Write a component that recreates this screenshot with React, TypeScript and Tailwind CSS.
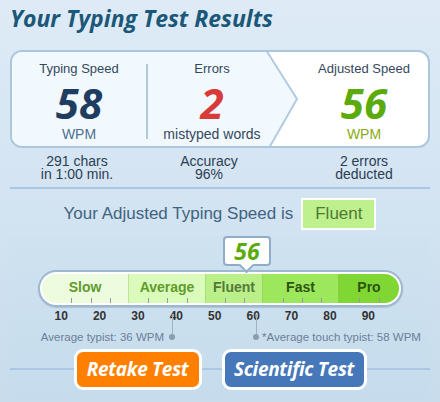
const heading = { fontFamily: '"Open Sans", "DejaVu Sans", sans-serif' };
const body = { fontFamily: '"Liberation Sans", Arial, sans-serif' };

const segments = [
  { label: 'Slow', w: 'w-[86px]', bg: 'bg-[#edfcdf]', text: 'text-[#5f9b2b]' },
  { label: 'Average', w: 'w-[77px]', bg: 'bg-[#dbfbbd]', text: 'text-[#5f9b2b]' },
  { label: 'Fluent', w: 'w-[57px]', bg: 'bg-[#baef8a]', text: 'text-[#56793a]' },
  { label: 'Fast', w: 'w-[76px]', bg: 'bg-[#9ce75c]', text: 'text-[#2d5412]' },
  { label: 'Pro', w: 'flex-1', bg: 'bg-[#80d632]', text: 'text-[#2d5412]' },
];

// wpm -> x inside the bar's inner track (track starts at page x 42)
const px = (wpm: number) => 33 + wpm * 3.84 - 42;
const ticks = [10, 15, 20, 30, 35, 40, 50, 55, 65, 70, 75, 85, 90, 95];

function Stat({ label, value, unit, color, unitColor }: { label: string; value: string; unit: string; color: string; unitColor: string }) {
  return (
    <div className="flex flex-col items-center pt-[9px]">
      <div className="text-[13px] leading-[16px] text-[#34485c]">{label}</div>
      <div className={`text-[42px] leading-[38px] mt-[7px] font-bold italic ${color}`} style={heading}>
        {value}
      </div>
      <div className={`text-[14px] leading-[16px] mt-[4px] ${unitColor}`}>{unit}</div>
    </div>
  );
}

export default function App() {
  return (
    <div className="w-[440px] h-[402px] overflow-hidden bg-gradient-to-b from-[#deebf7] to-[#c8dcec]" style={body}>
      <h1 className="px-[10px] pt-[3px] text-[23px] leading-[30px] font-bold italic text-[#1a5778]" style={heading}>
        Your Typing Test Results
      </h1>

      {/* result card */}
      <div className="relative mx-[10px] mt-[17px] h-[98px] rounded-[12px] border-2 border-[#abc6dd] bg-white overflow-hidden">
        <svg className="absolute inset-0" width="418" height="94" viewBox="0 0 418 94">
          <polygon points="0,0 254,0 285,47 257,94 0,94" fill="#f1f8fe" />
          <polyline points="254,-2 285,47 257,96" fill="none" stroke="#b3cbe0" strokeWidth="2" />
        </svg>
        <div className="relative flex h-full">
          <div className="w-[134px]">
            <Stat label="Typing Speed" value="58" unit="WPM" color="text-[#1f3d60]" unitColor="text-[#4f6f8f]" />
          </div>
          <div className="w-[2px] bg-[#afc7dc] mt-[12px] mb-[7px]" />
          <div className="w-[128px]">
            <Stat label="Errors" value="2" unit="mistyped words" color="text-[#d83a3a]" unitColor="text-[#34485c]" />
          </div>
          <div className="flex-1 pl-[24px]">
            <Stat label="Adjusted Speed" value="56" unit="WPM" color="text-[#5bab0d]" unitColor="text-[#8aaa12]" />
          </div>
        </div>
      </div>

      <div className="flex mx-[10px] mt-[7px] text-[14px] leading-[12.5px] text-[#2c3e52]">
        <div className="w-[134px] text-center">291 chars<br />in 1:00 min.</div>
        <div className="w-[130px] text-center">Accuracy<br />96%</div>
        <div className="flex-1 pl-[24px] text-center">2 errors<br />deducted</div>
      </div>

      <div className="mx-[10px] mt-[7px] h-[2px] bg-[#aac8e4]" />

      <div className="flex items-center justify-center mt-[9px] gap-[8px]">
        <span className="text-[17px] text-[#41637f]">Your Adjusted Typing Speed is</span>
        <span className="h-[32px] px-[12px] flex items-center border-2 border-white bg-[#bef08e] text-[17px] text-[#4f7833]">
          Fluent
        </span>
      </div>

      {/* speed scale */}
      <div className="mx-[10px] mt-[6px] h-[162px] bg-gradient-to-b from-[#cfe2f0] to-[#c6dcec]">
        <div className="relative w-[48px] h-[30px] ml-[213px] bg-white border-2 border-[#8fadc8] rounded-[4px] flex items-center justify-center z-10">
          <span className="text-[23px] leading-none font-bold italic text-[#5bab0d]" style={heading}>56</span>
          <div className="absolute left-[16px] bottom-[-7px] w-[11px] h-[11px] bg-white border-r-2 border-b-2 border-[#8fadc8] rotate-45" />
        </div>

        <div className="ml-[28px] mt-[4px] w-[365px] h-[37px] rounded-full border-2 border-[#9db8cf] bg-white p-[2px] shadow-[0_1px_1px_rgba(80,110,140,0.25)]">
          <div className="relative h-full rounded-full overflow-hidden flex">
            {segments.map((s, i) => (
              <div
                key={s.label}
                className={`${s.w} ${s.bg} ${i > 0 ? 'border-l border-[#8fc25a]/40' : ''} flex justify-center pt-[5px]`}
              >
                <span className={`text-[14px] leading-[17px] font-bold ${s.text}`}>{s.label}</span>
              </div>
            ))}
            {ticks.map((t) => (
              <div key={t} className="absolute bottom-0 w-px h-[5px] bg-[#9a9a9a]" style={{ left: px(t) }} />
            ))}
          </div>
        </div>

        <div className="flex ml-[32px] mt-[2px] text-[12px] leading-[14px] font-bold text-[#333]">
          {[10, 20, 30, 40, 50, 60, 70, 80, 90].map((n) => (
            <div key={n} className="w-[38.4px] text-center">{n}</div>
          ))}
        </div>

        <div className="relative h-[30px] -mt-[9px]">
          <div className="absolute left-[161.5px] top-0 w-px h-[21px] bg-[#9fb3c5]" />
          <div className="absolute left-[159px] top-[20px] w-[6px] h-[6px] rounded-full bg-[#8b9eb0]" />
          <div className="absolute right-[266px] top-[16px] text-[11.5px] leading-[14px] text-[#6a8099]">Average typist: 36 WPM</div>
          <div className="absolute left-[245.5px] top-0 w-px h-[21px] bg-[#9fb3c5]" />
          <div className="absolute left-[243px] top-[20px] w-[6px] h-[6px] rounded-full bg-[#8b9eb0]" />
          <div className="absolute left-[252px] top-[16px] text-[11.5px] leading-[14px] text-[#6a8099]">*Average touch typist: 58 WPM</div>
        </div>

        <div className="relative mt-[5px] h-[41px] flex items-center justify-center gap-[20px]">
          <div className="absolute left-0 right-0 top-[19px] h-[2px] bg-[#aac8e4]" />
          <button className="relative w-[128px] h-[41px] rounded-[9px] border-[3px] border-white bg-[#ff8000] text-white text-[19px] font-bold italic tracking-[-0.3px]" style={heading}>
            Retake Test
          </button>
          <button className="relative w-[145px] h-[41px] rounded-[9px] border-[3px] border-white bg-[#4677b8] text-white text-[19px] font-bold italic tracking-[-0.3px]" style={heading}>
            Scientific Test
          </button>
        </div>
      </div>
    </div>
  );
}
